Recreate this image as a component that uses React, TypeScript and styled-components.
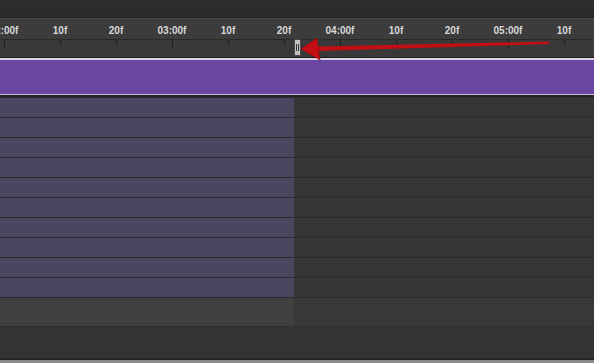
import styled, { createGlobalStyle } from 'styled-components';

const GlobalStyle = createGlobalStyle`
  html, body {
    margin: 0;
    padding: 0;
    background: #343434;
    overflow: hidden;
  }
  #root {
    width: 594px;
    height: 363px;
  }
`;

const Panel = styled.div`
  position: relative;
  width: 594px;
  height: 363px;
  display: flex;
  flex-direction: column;
  background: #343434;
  overflow: hidden;
  font-family: 'Liberation Sans', Arial, sans-serif;
`;

const TopBar = styled.div`
  height: 18px;
  flex: none;
  background: linear-gradient(#2f2f2f, #282828);
  border-bottom: 1px solid #474747;
`;

const Ruler = styled.div`
  height: 38px;
  flex: none;
  display: flex;
  margin-left: -24px;
  background: #3c3c3c;
`;

const TickCell = styled.div`
  width: 56px;
  flex: none;
  display: flex;
  flex-direction: column;
  align-items: center;
`;

const TickLabel = styled.div`
  box-sizing: border-box;
  height: 20px;
  width: 100%;
  padding-top: 3px;
  text-align: center;
  font-size: 10px;
  font-weight: bold;
  line-height: 17px;
  color: #d8d8d8;
  white-space: nowrap;
`;

const TickStrip = styled.div`
  height: 17px;
  width: 100%;
  border-top: 1px solid #2a2a2a;
  background: #393939;
  display: flex;
  justify-content: center;
`;

const TickMark = styled.div<{ $major?: boolean }>`
  width: 1px;
  height: ${(p) => (p.$major ? 8 : 5)}px;
  background: #222;
`;

const Band = styled.div`
  height: 35px;
  flex: none;
  background: #6a47a0;
  border-top: 1px solid #1c1c1c;
  box-shadow: inset 0 2px 0 #ddd4ea, inset 0 -1px 0 #c9b9e0;
  padding-top: 2px;
  border-bottom: 2px solid #242424;
`;

const Tracks = styled.div`
  display: flex;
  flex-direction: column;
  flex: none;
`;

const TrackRow = styled.div`
  height: 19px;
  display: flex;
  border-top: 1px solid #2a2a2e;
`;

const Clip = styled.div<{ $tone: string }>`
  width: 294px;
  flex: none;
  background: ${(p) => p.$tone};
`;

const Empty = styled.div<{ $tone: string }>`
  flex: 1;
  background: ${(p) => p.$tone};
  box-shadow: inset 0 1px 0 #3b3b3b;
`;

const FooterRow = styled.div`
  height: 28px;
  display: flex;
  border-top: 1px solid #2c2c2c;
`;

const Filler = styled.div`
  flex: 1;
  background: #343434;
  border-top: 1px solid #2e2e2e;
`;

const BottomEdge = styled.div`
  height: 3px;
  flex: none;
  background: #8a8a8a;
  border-top: 2px solid #262626;
`;

const Overlay = styled.svg`
  position: absolute;
  left: 0;
  top: 0;
  pointer-events: none;
`;

const ticks = [
  { label: '02:00f', major: true },
  { label: '10f' },
  { label: '20f' },
  { label: '03:00f', major: true },
  { label: '10f' },
  { label: '20f' },
  { label: '04:00f', major: true },
  { label: '10f' },
  { label: '20f' },
  { label: '05:00f', major: true },
  { label: '10f' },
];

export default function App() {
  return (
    <>
      <GlobalStyle />
      <Panel>
        <TopBar />
        <Ruler>
          {ticks.map((t, i) => (
            <TickCell key={i}>
              <TickLabel>{t.label}</TickLabel>
              <TickStrip>
                <TickMark $major={t.major} />
              </TickStrip>
            </TickCell>
          ))}
        </Ruler>
        <Band />
        <Tracks>
          {Array.from({ length: 10 }).map((_, i) => (
            <TrackRow key={i}>
              <Clip $tone="#4b4660" />
              <Empty $tone="#363636" />
            </TrackRow>
          ))}
          <FooterRow>
            <Clip $tone="#404040" />
            <Empty $tone="#383838" />
          </FooterRow>
        </Tracks>
        <Filler />
        <BottomEdge />
        <Overlay width="594" height="363" viewBox="0 0 594 363">
          <rect x="294.5" y="39.5" width="6" height="16" fill="#c2c2c2" stroke="#4a4a4a" />
          <line x1="296.5" y1="44" x2="296.5" y2="51" stroke="#333" />
          <line x1="298.5" y1="44" x2="298.5" y2="51" stroke="#333" />
          <path d="M318 46.5 L549 41.5 L549.5 44 L318 51 Z" fill="#c10f14" />
          <path d="M301 49 L317 38 L320 60 Z" fill="#c10f14" stroke="#8d0a0d" strokeWidth="0.6" />
        </Overlay>
      </Panel>
    </>
  );
}
